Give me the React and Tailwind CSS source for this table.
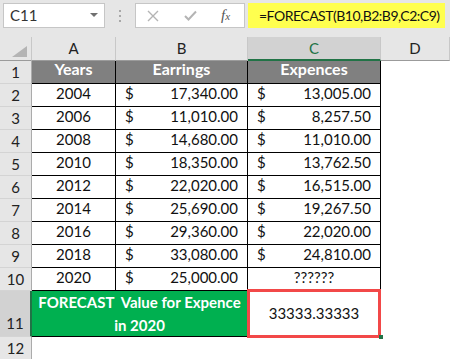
import React from "react";

const rows = [
  ["2004", "17,340.00", "13,005.00"],
  ["2006", "11,010.00", "8,257.50"],
  ["2008", "14,680.00", "11,010.00"],
  ["2010", "18,350.00", "13,762.50"],
  ["2012", "22,020.00", "16,515.00"],
  ["2014", "25,690.00", "19,267.50"],
  ["2016", "29,360.00", "22,020.00"],
  ["2018", "33,080.00", "24,810.00"],
];

const rowHead = "flex items-center justify-center bg-[#e6e6e6] border-r border-b border-r-[#ababab] border-b-[#d4d4d4] text-[15px] text-[#222]";
const cell = "flex items-end pb-[2px] border-r border-b border-black";
const colHead = "flex items-center justify-center bg-[#e6e6e6] border-r border-b border-r-[#c8c8c8] border-b-[#9b9b9b] text-[15px] text-[#222]";
const head = `${cell} justify-center bg-[#808080] text-white font-bold text-[16px]`;
const plain = `${cell} justify-center bg-white text-[#111] text-[15px]`;

const Money = ({ value }) => (
  <div className={`${cell} bg-white text-[#111] text-[15px] justify-between px-[9px]`}>
    <span>$</span>
    <span>{value}</span>
  </div>
);

export default function App() {
  return (
    <div className="w-[450px] h-[359px] overflow-hidden bg-white font-['Lato',sans-serif]">
      {/* --- FORMULA BAR --- */}
      <div className="h-[37px] bg-[#e6e6e6] flex items-start pt-[3px] pl-[3px] pr-[5px]">
        <div className="shrink-0 w-[102px] h-[25px] bg-white border border-[#c6c6c6] flex items-center justify-between pl-[6px] pr-[6px]">
          <span className="text-[15px] text-[#333]">C11</span>
          <svg width="8" height="5" viewBox="0 0 8 5"><polygon points="0,0 8,0 4,4" fill="#707070" /></svg>
        </div>
        <div className="shrink-0 w-[30px] h-[25px] flex flex-col items-center justify-center gap-[3px]">
          <span className="w-[2px] h-[2px] bg-[#a8a8a8]" />
          <span className="w-[2px] h-[2px] bg-[#a8a8a8]" />
          <span className="w-[2px] h-[2px] bg-[#a8a8a8]" />
        </div>
        <div className="shrink-0 w-[110px] h-[25px] bg-white border border-[#c6c6c6] flex items-center pl-[11px]">
          <svg width="12" height="12" viewBox="0 0 12 12"><path d="M1 1 L11 11 M11 1 L1 11" stroke="#b4b4b4" strokeWidth="1.4" /></svg>
          <svg className="ml-[25px]" width="13" height="11" viewBox="0 0 13 11"><path d="M1 6 L4.5 9.5 L12 1.5" fill="none" stroke="#b4b4b4" strokeWidth="2" /></svg>
          <span className="ml-[24px] font-['Liberation_Serif',serif] italic text-[15px] text-[#555] leading-none">
            f<span className="text-[11px]">x</span>
          </span>
        </div>
        <div className="ml-[3px] flex-1 min-w-0 overflow-hidden whitespace-nowrap h-[25px] bg-[#ffff4f] flex items-center pl-[11px] text-[14px] tracking-[-0.5px] text-[#111]">
          =FORECAST(B10,B2:B9,C2:C9)
        </div>
      </div>

      {/* --- SHEET GRID --- */}
      <div className="grid grid-cols-[32px_84px_132px_133px_69px] grid-rows-[24px_repeat(10,23px)_46px_23px]">
        <div className="relative bg-[#e6e6e6] border-r border-b border-r-[#c8c8c8] border-b-[#9b9b9b]">
          <svg className="absolute right-[4px] bottom-[3px]" width="15" height="11" viewBox="0 0 15 11"><polygon points="15,0 15,11 0,11" fill="#b4b4b4" /></svg>
        </div>
        <div className={colHead}>A</div>
        <div className={colHead}>B</div>
        <div className="flex items-center justify-center bg-[#d2d2d2] border-r border-r-[#c8c8c8] border-b-2 border-b-[#217346] text-[15px] text-[#217346]">C</div>
        <div className={colHead}>D</div>

        <div className={rowHead}>1</div>
        <div className={head}>Years</div>
        <div className={head}>Earrings</div>
        <div className={head}>Expences</div>
        <div className="bg-white" />

        {rows.map((r, i) => (
          <React.Fragment key={r[0]}>
            <div className={rowHead}>{i + 2}</div>
            <div className={plain}>{r[0]}</div>
            <Money value={r[1]} />
            <Money value={r[2]} />
            <div className="bg-white" />
          </React.Fragment>
        ))}

        <div className={rowHead}>10</div>
        <div className={plain}>2020</div>
        <Money value="25,000.00" />
        <div className={plain}>??????</div>
        <div className="bg-white" />

        <div className="flex items-end justify-center pb-[2px] bg-[#d2d2d2] border-r-2 border-r-[#217346] border-b border-b-[#d4d4d4] text-[15px] text-[#222]">11</div>
        <div className="col-span-2 flex items-center justify-center text-center bg-[#00b050] border-r border-b border-black text-white font-bold text-[15px] leading-[23px] whitespace-pre">
          {"FORECAST  Value for Expence\nin 2020"}
        </div>
        <div className="relative flex items-center justify-center bg-white border-r border-b border-black text-[15px] text-[#111]">
          33333.33333
          <div className="absolute z-10 -left-[1px] -right-[1px] -top-[2px] -bottom-[2px] border-[3px] border-[#f24848]" />
          <div className="absolute z-20 -right-[3px] -bottom-[3px] w-[4px] h-[4px] bg-[#217346]" />
        </div>
        <div className="bg-white" />

        <div className={rowHead}>12</div>
        <div className="col-span-4 bg-white" />
      </div>
    </div>
  );
}
